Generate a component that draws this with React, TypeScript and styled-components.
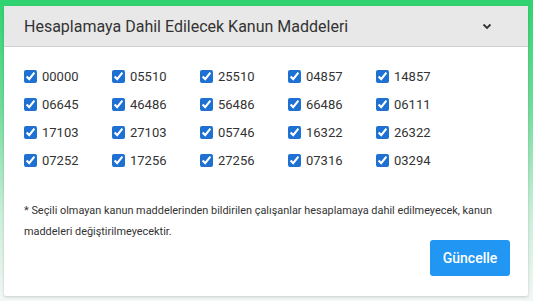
import styled, { createGlobalStyle } from 'styled-components'

const GlobalStyle = createGlobalStyle`
  body {
    margin: 0;
    font-family: Roboto, "Liberation Sans", Arial, sans-serif;
    background: #f3f7f5;
  }
`

const codes = [
  '00000', '05510', '25510', '04857', '14857',
  '06645', '46486', '56486', '66486', '06111',
  '17103', '27103', '05746', '16322', '26322',
  '07252', '17256', '27256', '07316', '03294',
]

const Frame = styled.div`
  width: 533px;
  height: 301px;
  box-sizing: border-box;
  padding: 6px 5px 5px 4px;
  background: linear-gradient(to bottom, #2fd36f 0%, #6fdc9a 35%, #c9eed8 70%, #f3f7f5 100%);
`

const Card = styled.section`
  background: #fff;
  border-radius: 2px;
  box-shadow: 0 1px 3px rgba(0, 0, 0, 0.18);
  height: 290px;
  display: flex;
  flex-direction: column;
`

const Header = styled.header`
  height: 41px;
  box-sizing: border-box;
  display: flex;
  align-items: center;
  justify-content: space-between;
  padding: 0 36px 0 20px;
  background: #e8e8e8;
  border-bottom: 1px solid #cfcfcf;
`

const Title = styled.h2`
  margin: 0;
  font-size: 16px;
  font-weight: 400;
  color: #333;
`

const Body = styled.div`
  padding: 15px 18px 20px 20px;
  display: flex;
  flex-direction: column;
`

const CodeGrid = styled.div`
  display: grid;
  grid-template-columns: repeat(5, 88px);
  grid-auto-rows: 28px;
`

const Item = styled.label`
  display: flex;
  align-items: center;
  gap: 5px;
  font-size: 13px;
  color: #333;
`

const Box = styled.input`
  margin: 0;
  width: 13px;
  height: 13px;
  accent-color: #1e70d2;
`

const Note = styled.p`
  margin: 26px 0 0;
  font-size: 10.9px;
  line-height: 21px;
  color: #333;
`

const Actions = styled.div`
  display: flex;
  justify-content: flex-end;
  margin-top: -2px;
`

const Button = styled.button`
  width: 80px;
  height: 36px;
  border: 0;
  border-radius: 3px;
  background: #2196f3;
  color: #fff;
  font-family: inherit;
  font-size: 14px;
  font-weight: 500;
`

export default function App() {
  return (
    <>
      <GlobalStyle />
      <Frame>
        <Card>
          <Header>
            <Title>Hesaplamaya Dahil Edilecek Kanun Maddeleri</Title>
            <svg width="10" height="7" viewBox="0 0 10 7">
              <path d="M1.5 1.5 5 5l3.5-3.5" fill="none" stroke="#333" strokeWidth="1.8" />
            </svg>
          </Header>
          <Body>
            <CodeGrid>
              {codes.map((c) => (
                <Item key={c}>
                  <Box type="checkbox" defaultChecked />
                  {c}
                </Item>
              ))}
            </CodeGrid>
            <Note>
              * Seçili olmayan kanun maddelerinden bildirilen çalışanlar hesaplamaya dahil edilmeyecek, kanun
              maddeleri değiştirilmeyecektir.
            </Note>
            <Actions>
              <Button>Güncelle</Button>
            </Actions>
          </Body>
        </Card>
      </Frame>
    </>
  )
}
